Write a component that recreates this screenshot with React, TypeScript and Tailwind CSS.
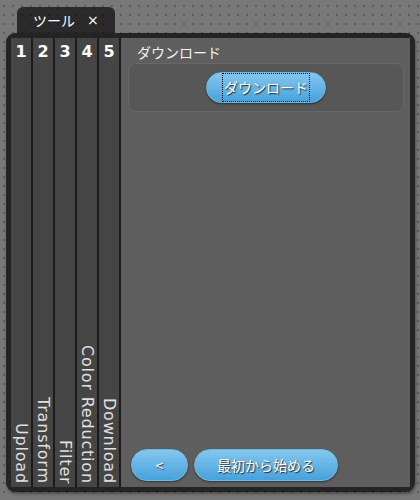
import React from 'react'

const steps = [
  { num: '1', label: 'Upload' },
  { num: '2', label: 'Transform' },
  { num: '3', label: 'Filter' },
  { num: '4', label: 'Color Reduction' },
  { num: '5', label: 'Download' },
]

const jp = "font-['Noto_Sans_CJK_JP',sans-serif]"

function BlueButton({ children, className = '' }: { children: React.ReactNode; className?: string }) {
  return (
    <button
      className={
        'h-[32px] rounded-full border border-[#6cb8e6] bg-gradient-to-b from-[#84c7ee] to-[#45a2dc] text-white text-[14px] ' +
        'shadow-[0_1px_2px_rgba(0,0,0,0.45)] [text-shadow:1px_1px_1px_#2a2a2a] flex items-center justify-center ' +
        jp + ' ' + className
      }
    >
      {children}
    </button>
  )
}

function StepColumn({ num, label }: { num: string; label: string }) {
  return (
    <div className="w-[22px] shrink-0 bg-[#454545] border-r-[2px] border-[#1b1b1b] flex flex-col items-center justify-between pt-[5px] pb-[3px]">
      <span className="text-[16px] font-bold text-white leading-[18px] font-['DejaVu_Sans',sans-serif]">{num}</span>
      <span className="[writing-mode:vertical-rl] text-[16px] tracking-[0.8px] text-[#e0e0e0] leading-[19px] font-['DejaVu_Sans',sans-serif] whitespace-nowrap">
        {label}
      </span>
    </div>
  )
}

export default function App() {
  return (
    <div className="w-[420px] h-[500px] overflow-hidden bg-[#787878] bg-[linear-gradient(to_bottom,transparent_2px,#787878_2px),linear-gradient(to_right,#5c5c5c_2px,transparent_2px)] bg-[length:9px_9px] bg-[position:3px_5px]">
      {/* Tab */}
      <div className="pt-[7px] pl-[17px]">
        <div className="w-[98px] h-[26px] rounded-t-[6px] bg-black/65 flex items-center pl-[16px] text-white">
          <span className={'text-[14px] ' + jp}>ツール</span>
          <span className="ml-[12px] text-[14px] font-['DejaVu_Sans',sans-serif]">×</span>
        </div>
      </div>

      {/* Panel */}
      <div className="ml-[6px] w-[409px] h-[459px] rounded-[9px] border-[5px] border-black/70 shadow-[1px_2px_3px_rgba(0,0,0,0.35)] flex">
        {steps.map((s) => (
          <StepColumn key={s.num} num={s.num} label={s.label} />
        ))}

        <div className="flex-1 bg-[#5e5e5e] flex flex-col">
          <div className={'pl-[16px] pt-[4px] text-[14px] leading-[20px] text-[#f2f2f2] ' + jp}>ダウンロード</div>

          <div className="ml-[7px] mr-[6px] mt-[1px] h-[49px] rounded-[8px] bg-[#575757] border border-[#686868] flex items-center justify-center">
            <BlueButton className="!h-[31px] w-[120px]">
              <span className="h-full flex items-center border border-dotted border-black px-[1px]">ダウンロード</span>
            </BlueButton>
          </div>

          <div className="mt-auto flex gap-[6px] pl-[10px] pb-[6px]">
            <BlueButton className="w-[57px]">&lt;</BlueButton>
            <BlueButton className="w-[144px]">最初から始める</BlueButton>
          </div>
        </div>
      </div>
    </div>
  )
}
